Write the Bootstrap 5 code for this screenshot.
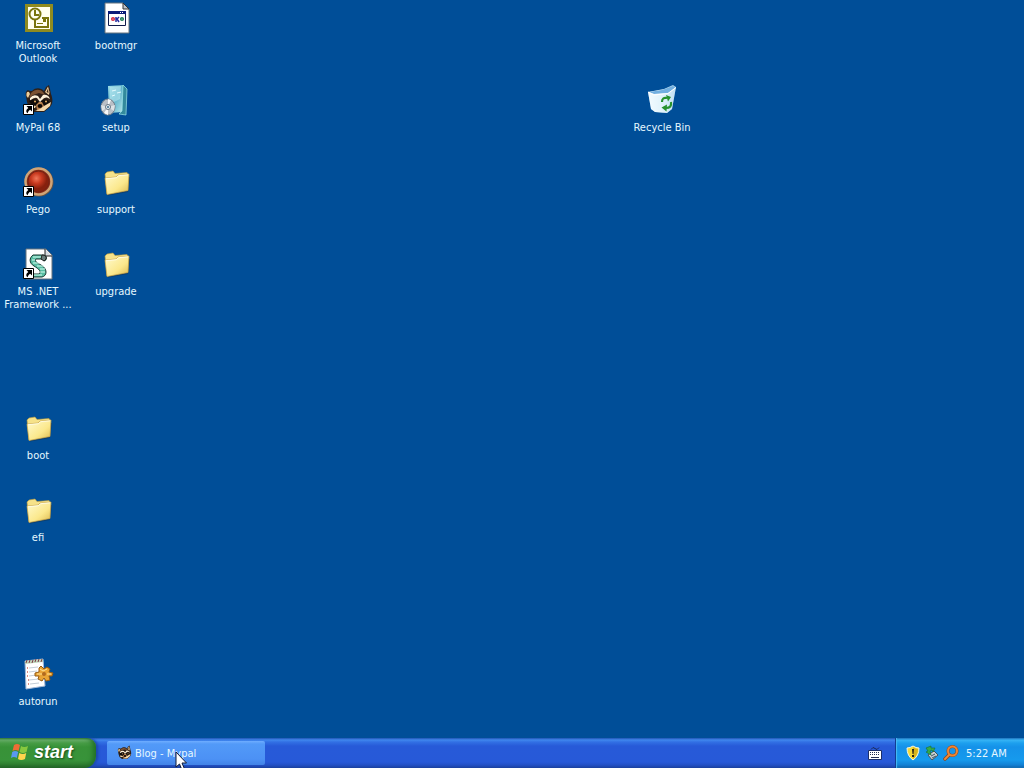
<!DOCTYPE html>
<html lang="en">
<head>
<meta charset="utf-8">
<meta name="viewport" content="width=device-width, initial-scale=1">
<title>Desktop</title>
<link rel="stylesheet" href="https://cdn.jsdelivr.net/npm/bootstrap@5.3.0/dist/css/bootstrap.min.css">
<style>
body { background: #004e98; color: #e6f8ff; font-family: Tahoma, "DejaVu Sans Condensed", "DejaVu Sans", sans-serif; font-size: 11px; line-height: 13px; overflow: hidden; }
/* Desktop icons sit on an even grid, filled by row and column */
.icon-grid { display: grid; grid-template-columns: repeat(auto-fill, 76px); grid-auto-rows: 82px; column-gap: 2px; min-height: 0; }
.desk-icon { padding-top: 2px; gap: 5px; color: #e6f8ff; text-align: center; min-width: 0; }
.desk-icon svg { width: 32px; height: 32px; flex: none; }
.c1 { grid-column: 1; } .c2 { grid-column: 2; } .c9 { grid-column: 9; }
.r1 { grid-row: 1; } .r2 { grid-row: 2; } .r3 { grid-row: 3; } .r4 { grid-row: 4; }
.r6 { grid-row: 6; } .r7 { grid-row: 7; } .r9 { grid-row: 9; }
.taskbar { height: 30px; background: linear-gradient(#1f55b4 0, #4087ee 2px, #3270e4 4px, #275ad8 8px, #2759d8 24px, #2350c5 27px, #1a409e 30px); }
.start-btn { width: 96px; padding: 0 0 2px 10px; gap: 4px; color: #fff; border-radius: 0 9px 12px 0; background: linear-gradient(#2f7a3c 0, #67ad68 2px, #479c46 5px, #389238 9px, #38933a 22px, #2f8031 26px, #226127 30px); box-shadow: inset -5px 0 5px -2px #226f27, 2px 0 3px #1b48a8; font: italic bold 18px/26px "Liberation Sans", Arial, sans-serif; text-shadow: 1px 1px 2px #174c19; }
.task-btn { width: 158px; height: 24px; margin: 3px 0 0 11px; padding: 0 0 0 9px; gap: 3px; color: #e6f8ff; border-radius: 2px; background: linear-gradient(#6fadff 0, #529af8 3px, #4c91f5 18px, #4283e6 24px); }
.tray { width: 129px; gap: 3px; padding-left: 9px; border-left: 1px solid #123d91; background: linear-gradient(#1b69b4 0, #37b4f5 2px, #1da0ee 5px, #1592e9 9px, #169aed 22px, #1280d4 27px, #0e62a9 30px); box-shadow: inset 1px 0 1px #49bcf5; }
.pointer { position: absolute; left: 175px; bottom: -3px; width: 13px; height: 20px; pointer-events: none; }
</style>
</head>
<body>
<svg width="0" height="0" class="position-absolute" aria-hidden="true">
  <defs>
    <linearGradient id="gFolder" x2="1" y2="1"><stop stop-color="#fffbd0"/><stop offset=".6" stop-color="#fbe88c"/><stop offset="1" stop-color="#dcb94e"/></linearGradient>
    <linearGradient id="gGlass" x2="1" y2="1"><stop stop-color="#9fe0e8"/><stop offset=".5" stop-color="#5fb4cc"/><stop offset="1" stop-color="#b5e6ea"/></linearGradient>
    <linearGradient id="gBin" x2="1" y2="0"><stop stop-color="#f4fbff"/><stop offset=".5" stop-color="#d3ebf7"/><stop offset="1" stop-color="#8fc3e6"/></linearGradient>
    <radialGradient id="gRed" cx=".4" cy=".35"><stop stop-color="#f0785a"/><stop offset=".5" stop-color="#c93a20"/><stop offset="1" stop-color="#86200e"/></radialGradient>
  </defs>
  <symbol id="folder" viewBox="0 0 32 32">
    <path d="M7 12 8 29.500 28 26 30 11Z" fill="#14304c" opacity=".55"/>
    <path d="M5 8 7 6 13 5 15 7.500 27 6.500 28 8 27.500 24 7 28Z" fill="#f6e289" stroke="#b99a3e" stroke-width=".6"/>
    <path d="M5 12 16 11 18 9 29 8 28 24.500 7 28.500Z" fill="url(#gFolder)" stroke="#c5a44b" stroke-width=".7"/>
    <path d="M6 12.700 16.500 11.700 18.500 9.700 28.200 8.800" fill="none" stroke="#fffde8" stroke-width=".9"/>
  </symbol>
  <symbol id="arrow" viewBox="0 0 11 11">
    <path fill="#fff" stroke="#000" d="M.5.5h10v10H.5z"/><path d="M3.500 2H9v5.500L7.200 5.800C5.500 7 4.800 8 4.800 9.300 2.500 8 3 5.500 5.300 3.900Z"/>
  </symbol>
  <symbol id="raccoon" viewBox="0 0 32 32">
    <path d="M4 12C3 8 5 5 8 7L10 7C14 3 19 4 22 7L24 3 27 1 28 5 29 10C31 15 31 20 28 23L22 28 12 28 7 24 5 18Z" fill="#2e2018"/>
    <path d="M4.500 12Q4 7 7 8L8 10 6 14ZM23 8 26 2.500 27.500 8 27 11Z" fill="#f0cf9c"/><path d="M24.500 8 26 4.500 26.500 9Z" fill="#3e281b"/>
    <path d="M9 9C13 5 18 5 21 8L23 11 17 9 11 11 7 14Z" fill="#7b5232"/>
    <path d="M8 14Q11 10 16 12L18 15 21 11Q26 10 28 15L25 13.500Q22 13 20 16L18 18 15 14Q12 13 8 17Z" fill="#fff3da"/>
    <path d="M7 17Q12 13 17 18L15 21H10ZM19 17Q25 13 28 19L25 22 21 21Z" fill="#120d0b"/>
    <path d="M14 21 17 18H20L22 22 20 26 15 26Z" fill="#b9824f"/><ellipse cx="18" cy="22" rx="2.500" ry="2" fill="#0e0908"/>
    <path d="M22 22 29 18 28 22 22 27 13 27 18 25ZM8 21 14 22 13 24 9 24Z" fill="#f5d9ac"/>
    <circle cx="13" cy="17.500" r="1" fill="#e7b067"/><circle cx="24" cy="17.500" r="1" fill="#e7b067"/>
  </symbol>
</svg>

<div class="d-flex flex-column vh-100">
  <main class="icon-grid flex-grow-1">
    <a href="#" class="desk-icon c1 r1 d-flex flex-column align-items-center text-decoration-none">
      <svg viewBox="0 0 32 32" aria-hidden="true"><path fill="#8f8b20" d="M3 2h28v28H3z"/><path fill="#fffff0" d="M6 5h22v22H6z"/><path d="M13 17h15v8H13z" fill="#fffff0"/><g fill="none" stroke="#79750e" stroke-width="2"><path d="M13 18v7h13v-9h-6"/><circle cx="13" cy="12" r="5.500" fill="#fffff0"/><path d="M13 8v5h4"/></g><path d="M21 17h3v3h-3zM15 21h6v1h-6z" fill="#79750e"/></svg>
      <span>Microsoft<br>Outlook</span></a>
    <a href="#" class="desk-icon c2 r1 d-flex flex-column align-items-center text-decoration-none">
      <svg viewBox="0 0 32 32" aria-hidden="true"><path d="M5 1h18l6 6v24H5z" fill="#fff" stroke="#66727d"/><path d="M23 1v6h6Z" fill="#bcc3ca" stroke="#333"/><path d="M8.500 9.500h17v14h-17z" fill="#fff" stroke="#111b4b"/><path d="M8 9h18v3H8z" fill="#0a1b79"/><path d="M20 10h1v1h-1zM22 10h1v1h-1z" fill="#fff"/><g fill="none" stroke-width="1.500"><circle cx="13" cy="17" r="1.300" stroke="#d22840"/><path d="M16 15v5M19 15l-2 2 2 3" stroke="#252da0"/><circle cx="22" cy="17" r="1.300" stroke="#167a52"/></g></svg>
      <span>bootmgr</span></a>
    <a href="#" class="desk-icon c1 r2 d-flex flex-column align-items-center text-decoration-none">
      <svg viewBox="0 0 32 32" aria-hidden="true"><use href="#raccoon" width="32" height="32"/><use href="#arrow" x="1" y="20" width="11" height="11"/></svg>
      <span>MyPal 68</span></a>
    <a href="#" class="desk-icon c2 r2 d-flex flex-column align-items-center text-decoration-none">
      <svg viewBox="0 0 32 32" aria-hidden="true"><path d="M8 2 23 1 23 28 9 29Z" fill="url(#gGlass)"/><path d="M23 1 27 5 26 31 19 30 22 27Z" fill="#328a9c" stroke="#9ce5e9" stroke-width=".7"/><path d="M10 3 21 2 20 15 10 20Z" fill="#b4e5ef" opacity=".6"/><path d="M12 7 16 6M17 9l4-1M12 12l3-1" stroke="#e4fbff"/><ellipse cx="8" cy="23" rx="7" ry="8" fill="#b9bfc6" stroke="#707d89"/><path d="M8 15 11 16 8 23ZM8 31 4 29 8 23Z" fill="#f7f8f9"/><path d="M1 21 8 23 2 27ZM15 21 8 23 14 27Z" fill="#dce2e5"/><circle cx="8" cy="23" r="2.500" fill="#e9f2f6" stroke="#657583"/><circle cx="8" cy="23" r="1" fill="#38698a"/></svg>
      <span>setup</span></a>
    <a href="#" class="desk-icon c9 r2 d-flex flex-column align-items-center text-decoration-none">
      <svg viewBox="0 0 32 32" aria-hidden="true"><path d="M2 8 18 5 27 1 30 3 26 25 21 29 9 28 5 25Z" fill="url(#gBin)"/><path d="M3 8 16 6 27 2 29 4 22 9 8 10Z" fill="#72afe0"/><path d="M2 8 8 10 22 9 30 3 26 25 21 29 9 28 5 25Z" fill="#f2fbff" opacity=".5"/><path d="M2 8 8 11 22 9.500 30 3.500" fill="none" stroke="#fff"/><g fill="none" stroke="#27922d" stroke-width="2.200"><path d="M16 18Q16 13 21 14"/><path d="M25 18Q26 24 20 24"/></g><path d="M20 11 25 13 22 17.500ZM21 20.500 20.500 27.500 15.500 23.500Z" fill="#27922d"/></svg>
      <span>Recycle Bin</span></a>
    <a href="#" class="desk-icon c1 r3 d-flex flex-column align-items-center text-decoration-none">
      <svg viewBox="0 0 32 32" aria-hidden="true"><circle cx="17" cy="16" r="14.500" fill="#695342"/><circle cx="16.500" cy="15.500" r="13" fill="#8b2c19" stroke="#cfa477" stroke-width="2.500"/><circle cx="16.500" cy="15.500" r="10.500" fill="url(#gRed)" stroke="#722315"/><use href="#arrow" x="1" y="20" width="11" height="11"/></svg>
      <span>Pego</span></a>
    <a href="#" class="desk-icon c2 r3 d-flex flex-column align-items-center text-decoration-none">
      <svg aria-hidden="true"><use href="#folder"/></svg><span>support</span></a>
    <a href="#" class="desk-icon c1 r4 d-flex flex-column align-items-center text-decoration-none">
      <svg viewBox="0 0 32 32" aria-hidden="true"><path d="M4 1h20l6 6v24H4z" fill="#fff" stroke="#66727d"/><path d="M23 1v7h7" fill="#d7dce1" stroke="#222"/><path d="M11 7H21C25 7 26 12 22 13L20 11H14C12 13 15 15 19 17 26 21 25 28 20 29H10L7 26H17C20 24 17 21 12 18 7 15 7 10 11 7Z" fill="#58bda3" stroke="#15372f"/><path d="M11 9H21M10 12H13M11 15H17M15 18H22M18 21H23M18 24H23M11 27H20" stroke="#d2fff0"/><path d="M20 7Q25 7 24 11L22 13 19 11Z" fill="#697e7c" stroke="#222"/><use href="#arrow" x="1" y="20" width="11" height="11"/></svg>
      <span>MS .NET Framework ...</span></a>
    <a href="#" class="desk-icon c2 r4 d-flex flex-column align-items-center text-decoration-none">
      <svg aria-hidden="true"><use href="#folder"/></svg><span>upgrade</span></a>
    <a href="#" class="desk-icon c1 r6 d-flex flex-column align-items-center text-decoration-none">
      <svg aria-hidden="true"><use href="#folder"/></svg><span>boot</span></a>
    <a href="#" class="desk-icon c1 r7 d-flex flex-column align-items-center text-decoration-none">
      <svg aria-hidden="true"><use href="#folder"/></svg><span>efi</span></a>
    <a href="#" class="desk-icon c1 r9 d-flex flex-column align-items-center text-decoration-none">
      <svg viewBox="0 0 32 32" aria-hidden="true"><path d="M3 3 21 1 23 28 4 31Z" fill="#fff" stroke="#a3b8d6"/><path d="M3 3 21 1v3L3 6Z" fill="#bed4b8"/><path d="M4 5 5 2M7 5 8 2M10 5l1-3M13 4l1-3M16 4l1-3M19 4l1-3" stroke="#803e4b"/><path d="M7 10 16 9M7 14l8-1M7 18l7-1M7 22l10-1M8 26l9-1" stroke="#c4ced8"/><path d="M5 10h1M5 14h1M5 18h1M6 22h1M6 26h1" stroke="#cf675a" stroke-width="1.500"/><path d="M17 10 19 8 22 11 25 9 28 11 27 14 31 15 30 18 27 18 28 22 24 23 22 20 20 23 16 21 17 18 13 18 13 15 17 14Z" fill="#eaa536" stroke="#965b14"/><path d="M18 11 21 13 25 11M15 16 20 16M25 16 29 16" stroke="#ffe295" fill="none"/><circle cx="22" cy="16" r="2" fill="#b16a1f"/></svg>
      <span>autorun</span></a>
  </main>

  <footer class="taskbar d-flex align-items-stretch flex-shrink-0 position-relative">
    <button type="button" class="start-btn border-0 d-flex align-items-center">
      <svg width="20" height="20" viewBox="0 0 20 20" aria-hidden="true"><path d="M4 3Q7 1 10 3L8.500 9Q5.500 7 2.500 9Z" fill="#ef6d35"/><path d="M11 4Q14 6 18 4L16.500 10Q13 12 9.500 10Z" fill="#87c83f"/><path d="M2.200 10Q5 8 8.200 10L6.700 16Q4 14 1 16Z" fill="#5a98f0"/><path d="M9.200 11Q13 13 16.200 11L15 17Q11 19 8 17Z" fill="#ffd54d"/></svg>
      <span>start</span></button>
    <button type="button" class="task-btn border-0 d-flex align-items-center">
      <svg width="16" height="16" aria-hidden="true"><use href="#raccoon"/></svg><span>Blog - Mypal</span></button>
    <button type="button" class="btn p-0 border-0 ms-auto me-2 pe-1 d-flex align-items-center" aria-label="Keyboard">
      <svg width="16" height="16" viewBox="0 0 16 16" aria-hidden="true"><path d="M4 4.500Q6 1 8 3.500T12 2.500" fill="none" stroke="#182956"/><path d="M1.500 5.500h13v9h-13z" fill="#fff" stroke="#1a2e69"/><path d="M3 7.500h10M3 9.500h10" stroke="#222d50" stroke-dasharray="1 1"/><path d="M4 12.500h8" stroke="#222d50"/></svg></button>
    <div class="tray d-flex align-items-center">
      <svg width="16" height="16" viewBox="0 0 16 16" aria-hidden="true"><path d="M8 1Q11 3 14 3 14 11 8 15 2 11 2 3 5 3 8 1Z" fill="#f5d936" stroke="#f4f4df"/><path d="M8 2Q11 4 13 4 13 10 8 14Z" fill="#d6b41c"/><path d="M7 4h2l-.5 5h-1zM7 10h2v2H7z" fill="#252315"/></svg>
      <svg width="16" height="16" viewBox="0 0 16 16" aria-hidden="true"><path d="M4 10 10 6 14 10 8 15Z" fill="#cad3d4" stroke="#45545c"/><path d="M7 11 11 9M8 13l4-2" stroke="#425563"/><path d="M2 3 7 1 7 3 11 3 9 7 8 5 6 6 7 10 2 7 4 6Z" fill="#36ab48" stroke="#156c32" stroke-width=".6"/></svg>
      <svg width="16" height="16" viewBox="0 0 16 16" aria-hidden="true"><g fill="none" stroke-linecap="round"><path d="M6 10 2 14" stroke="#8e441b" stroke-width="3.500"/><circle cx="9.500" cy="6" r="4.500" stroke="#994818" stroke-width="3"/><path d="M6 10 2 14" stroke="#f28a35" stroke-width="2"/><circle cx="9.500" cy="6" r="4.500" stroke="#f08632" stroke-width="2"/></g></svg>
      <time datetime="05:22" class="ps-1 text-nowrap">5:22 AM</time>
    </div>
    <svg class="pointer" viewBox="0 0 13 20" aria-hidden="true"><path d="M1 1V16L4.500 13 7 19 9.500 18 7 12H11.500Z" fill="#fff" stroke="#111b36"/></svg>
  </footer>
</div>
<script src="https://cdn.jsdelivr.net/npm/bootstrap@5.3.0/dist/js/bootstrap.bundle.min.js"></script>
</body>
</html>
